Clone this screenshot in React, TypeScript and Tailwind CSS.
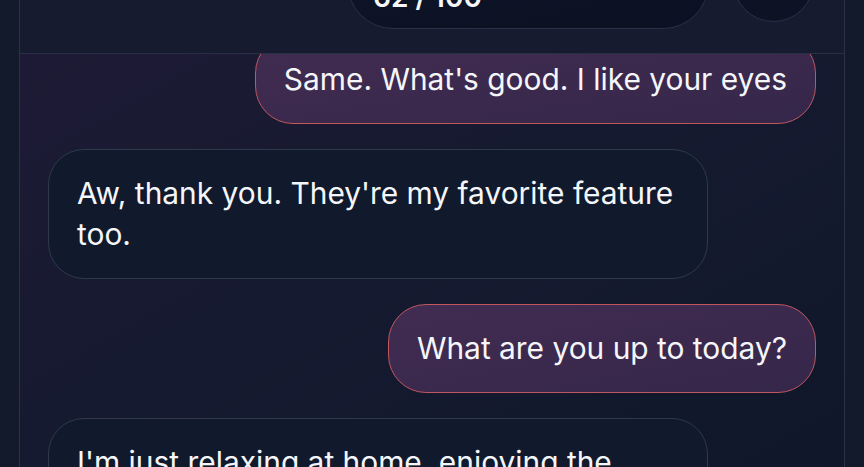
import React from "react";

type Message = { id: number; from: "me" | "them"; text: string };

const messages: Message[] = [
  { id: 1, from: "me", text: "Same. What's good. I like your eyes" },
  { id: 2, from: "them", text: "Aw, thank you. They're my favorite feature too." },
  { id: 3, from: "me", text: "What are you up to today?" },
  { id: 4, from: "them", text: "I'm just relaxing at home, enjoying the quiet afternoon with a cup of tea." },
];

function Bubble({ m }: { m: Message }) {
  if (m.from === "me") {
    return (
      <div className="flex justify-end">
        <div className="max-w-[660px] rounded-[38px] border border-[#c0565f] bg-gradient-to-br from-[#422c51] to-[#35274a] px-[28px] py-[23px] text-[29.9px] leading-[41px] text-[#f5f6fa]">
          {m.text}
        </div>
      </div>
    );
  }
  return (
    <div className="flex justify-start">
      <div className="max-w-[660px] rounded-[36px] border border-[#2e394e] bg-[#111a2c] px-[28px] py-[23px] text-[29.9px] leading-[41px] text-[#f5f6fa]">
        {m.text}
      </div>
    </div>
  );
}

export default function App() {
  return (
    <div
      className="flex h-[467px] w-full overflow-hidden bg-[#121a2b] px-[19px]"
      style={{ fontFamily: "Inter, 'Noto Sans', sans-serif" }}
    >
      <div className="flex min-w-0 flex-1 flex-col border-x border-[#2a3248] bg-gradient-to-br from-[#1f1a36] via-[#151a30] to-[#10172a]">
        <header className="relative z-10 -mt-[90px] flex items-center justify-end gap-6 border-b border-[#283046] bg-[#161b30] py-6 pr-[30px]">
          <div className="flex h-[95px] w-[362px] flex-col items-start justify-end rounded-[46px] border border-[#283147] bg-gradient-to-br from-[#0f1529] to-[#0b1122] px-[25px] pb-[14px]">
            <span className="text-[15px] text-slate-400">Messages left</span>
            <span className="text-[28px] font-semibold leading-[34px] text-[#f5f6fa]">62 / 100</span>
          </div>
          <div className="h-[81px] w-[81px] rounded-full border border-[#283147] bg-[#0d1325]" />
        </header>
        <div className="flex-1 overflow-hidden px-7">
          <div className="-mt-[19px] flex flex-col gap-[25px]">
            {messages.map((m) => (
              <Bubble key={m.id} m={m} />
            ))}
          </div>
        </div>
      </div>
    </div>
  );
}
